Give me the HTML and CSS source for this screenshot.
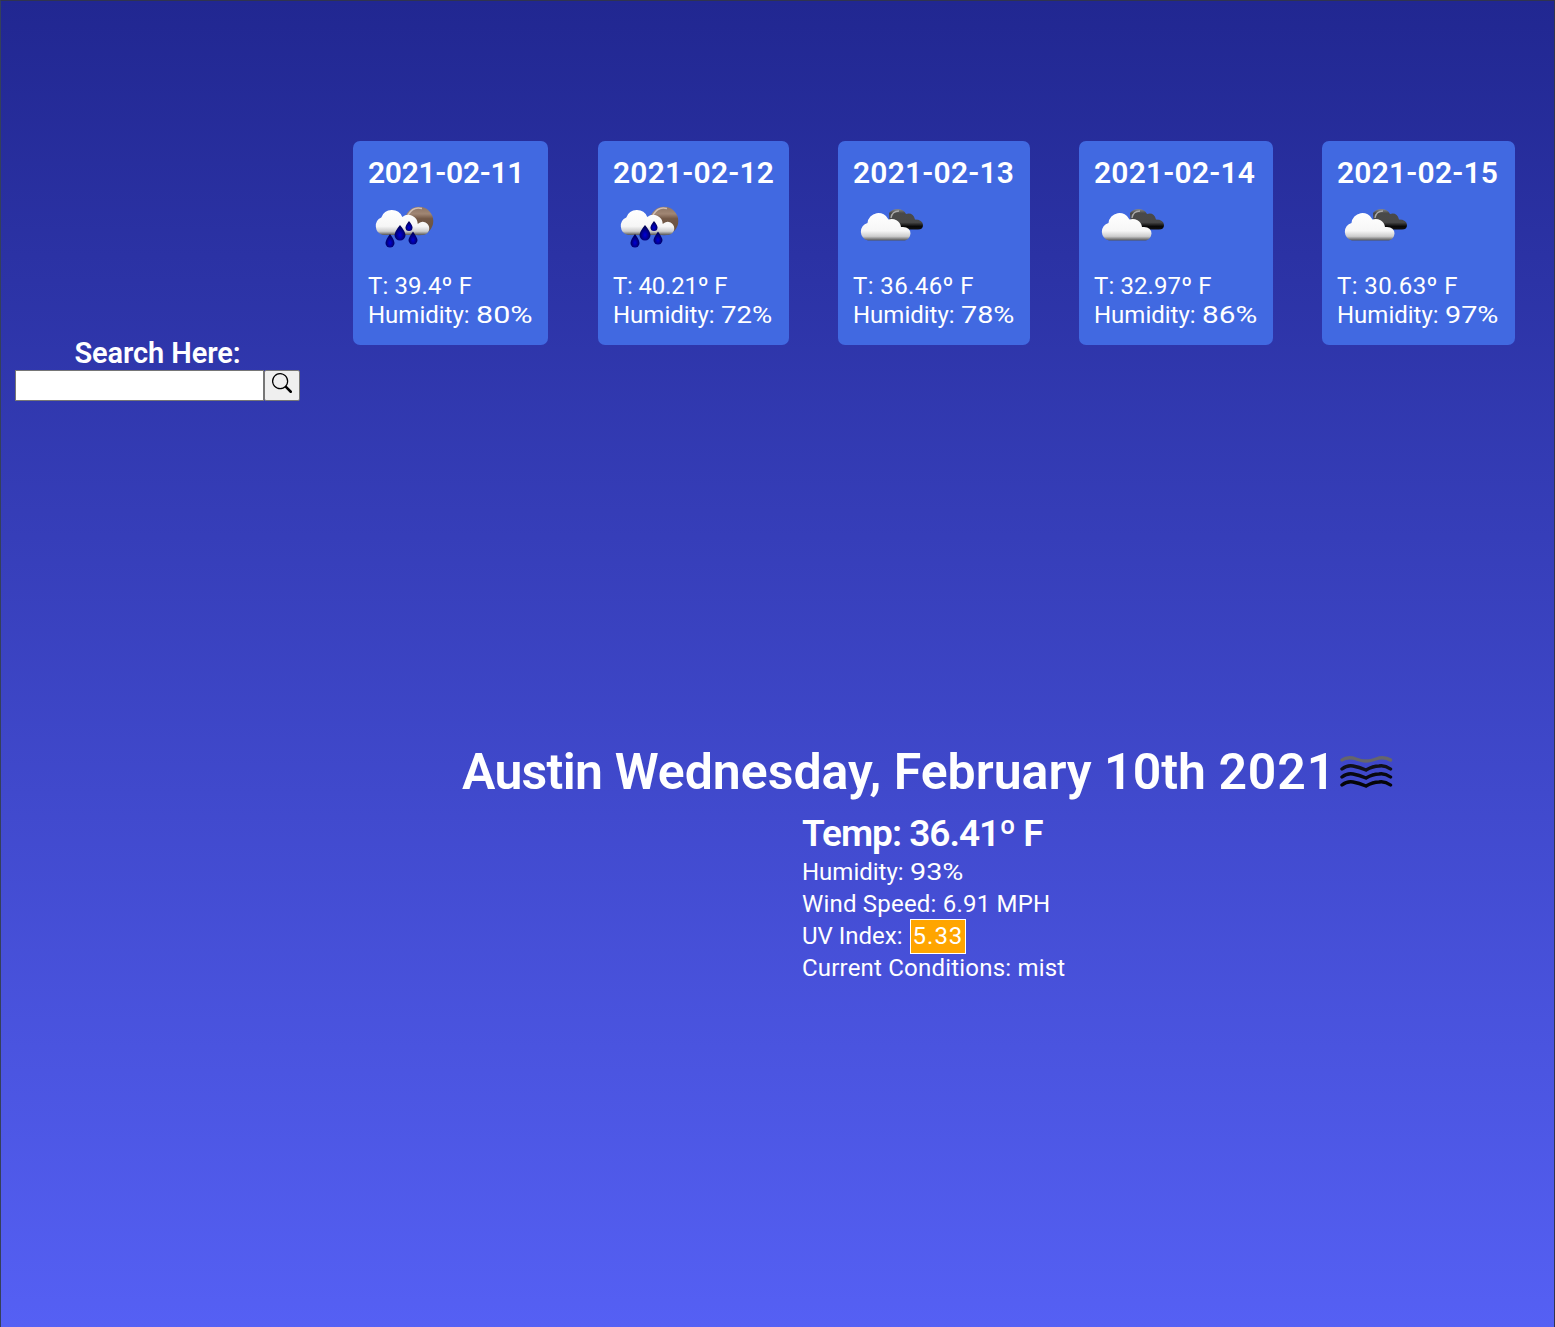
FILE: index.html
```html
<!DOCTYPE html>
<html lang="en">
<head>
<meta charset="utf-8">
<title>Weather Dashboard</title>
<link rel="stylesheet" href="styles.css">
</head>
<body>
<svg class="defs" aria-hidden="true">
  <defs>
    <linearGradient id="white" x1="0" y1="0" x2="0" y2="1"><stop offset="0" stop-color="#fff"/><stop offset=".65" stop-color="#f6f6f6"/><stop offset=".85" stop-color="#ccc"/><stop offset="1" stop-color="#555"/></linearGradient>
    <linearGradient id="dark" x1="0" y1="0" x2="0" y2="1"><stop offset="0" stop-color="#888"/><stop offset=".2" stop-color="#494949"/><stop offset=".65" stop-color="#484848"/><stop offset=".85" stop-color="#080808"/><stop offset="1" stop-color="#111"/></linearGradient>
    <linearGradient id="moon" x1="0" y1="0" x2="0" y2="1"><stop offset="0" stop-color="#8c7363"/><stop offset=".25" stop-color="#a08674"/><stop offset=".42" stop-color="#735846"/><stop offset="1" stop-color="#63503f"/></linearGradient>
    <radialGradient id="drop" cx=".5" cy=".65" r=".5"><stop offset="0" stop-color="#0000d8"/><stop offset="1" stop-color="#00005c"/></radialGradient>
    <symbol id="rain" viewBox="0 0 80 83">
      <circle cx="51" cy="33" r="14.300" fill="url(#moon)"/>
      <path d="M40 27Q45 18 54 20.500" fill="none" stroke="#d0beb2" stroke-width="1.500"/>
      <path d="M16 47.500A9.300 9.300 0 0 1 14.500 30A11.300 11.300 0 0 1 35.500 29.500A9.500 9.500 0 0 1 51 36.500A6.600 6.600 0 1 1 55 47.500Z" transform="translate(-1.200 -.5)" fill="url(#white)"/>
      <g fill="url(#drop)"><path d="M32 37Q37 43 37.500 47A5.300 5.300 0 0 1 26.500 47Q27 43 32 37Z"/><path d="M41 33Q44.500 37 44.500 39.500A3.500 3.500 0 0 1 37.500 39.500Q37.500 37 41 33Z"/><path d="M22 46Q26 51 26.500 55A4.300 4.300 0 0 1 17.500 55Q18 51 22 46Z"/><path d="M45 43.500Q49 49 49.500 52A4.300 4.300 0 0 1 40.500 52Q41 49 45 43.500Z"/></g>
    </symbol>
    <symbol id="clouds" viewBox="0 0 80 83">
      <path d="M37 41.500L36 25Q39 21 45 21Q51 21.500 53 26Q60 24 62 31.500Q69.500 31.500 70 37Q70 41.500 65 41.500Z" fill="url(#dark)"/>
      <path d="M38 30Q39 23 46 23" fill="none" stroke="#aaa" stroke-width="1.300"/>
      <path d="M15 52.500A9 9 0 0 1 14.500 35A11 11 0 0 1 35.500 31.500A9.500 9.500 0 0 1 48 39Q57 38 57.500 45.500Q57 51 52 52.500Z" fill="url(#white)"/>
    </symbol>
  </defs>
</svg>
<div class="page">
  <aside class="search">
    <label class="search-title" for="city">Search Here:</label>
    <form class="search-form">
      <input class="search-input" id="city" type="text">
      <button class="search-button" type="button" aria-label="Search">
        <svg width="20" height="20" viewBox="0 0 16 16"><path d="M11.742 10.344a6.500 6.500 0 1 0-1.397 1.398h-.001c.03.04.062.078.098.115l3.850 3.850a1 1 0 0 0 1.415-1.414l-3.850-3.850a1.007 1.007 0 0 0-.115-.1zM12 6.500a5.500 5.500 0 1 1-11 0 5.500 5.500 0 0 1 11 0z"/></svg>
      </button>
    </form>
  </aside>
  <main class="content">
    <section class="forecast">
      <article class="card card-1"><h2 class="date">2021-02-11</h2><svg class="icon"><use href="#rain"/></svg><p class="line temperature">T: 39.4º F</p><p class="line">Humidity: <span class="value">80%</span></p></article>
      <article class="card card-2"><h2 class="date">2021-02-12</h2><svg class="icon"><use href="#rain"/></svg><p class="line temperature">T: 40.21º F</p><p class="line">Humidity: <span class="value">72%</span></p></article>
      <article class="card card-3"><h2 class="date">2021-02-13</h2><svg class="icon"><use href="#clouds"/></svg><p class="line temperature">T: 36.46º F</p><p class="line">Humidity: <span class="value">78%</span></p></article>
      <article class="card card-4"><h2 class="date">2021-02-14</h2><svg class="icon"><use href="#clouds"/></svg><p class="line temperature">T: 32.97º F</p><p class="line">Humidity: <span class="value">86%</span></p></article>
      <article class="card card-5"><h2 class="date">2021-02-15</h2><svg class="icon"><use href="#clouds"/></svg><p class="line temperature">T: 30.63º F</p><p class="line">Humidity: <span class="value">97%</span></p></article>
    </section>
    <section class="current">
      <h1 class="place"><span><span class="city">Austin</span> Wednesday, February 10th <span class="year">2021</span></span>
        <svg class="mist" width="54" height="34" viewBox="0 0 54 34" fill="none" stroke-width="3.400" stroke-linecap="round"><path stroke="#65656b" d="M2 5Q6 2 13 3Q21 6 26 6Q31 6 39 3Q46 2 50.500 5"/><path stroke="#101018" d="M2 14Q7 10 13 11Q19 12 26 15Q33 11 39 11Q45 10 50.500 14"/><path stroke="#080810" d="M2 22Q7 18 13 19Q19 20 26 23Q33 19 39 19Q45 18 50.500 22"/><path stroke="#050508" d="M2 30Q7 26 13 27Q19 28 26 31Q33 27 39 27Q45 26 50.500 30"/></svg>
      </h1>
      <div class="details">
        <h2 class="temp">Temp: 36.41º F</h2>
        <p class="detail">Humidity: <span class="value">93%</span></p>
        <p class="detail wind">Wind Speed: 6.91 MPH</p>
        <p class="detail index">UV Index: <span class="uv">5.33</span></p>
        <p class="detail conditions">Current Conditions: mist</p>
      </div>
    </section>
  </main>
</div>
</body>
</html>
```
FILE: styles.css
```css
* { box-sizing: border-box; }
body { margin: 0; font-family: Roboto, "Liberation Sans", sans-serif; color: #fff; }
h1, h2, p { margin: 0; white-space: nowrap; }
.defs { display: block; width: 0; height: 0; }
.page { display: flex; height: 1327px; border: 1px solid #30344f; border-left-color: #35405a; border-bottom: 0; background: linear-gradient(#212791, #5560f4); }
.search { width: 313px; padding: 337px 14px 0; }
.search-title { display: block; height: 32px; line-height: 30px; text-align: center; font-size: 29px; font-weight: 600; letter-spacing: -0.1px; }
.search-form { display: flex; }
.search-input { width: 249px; height: 31px; padding: 0; background: #fff; border: 1px solid #767676; border-radius: 0; }
.search-button { display: flex; align-items: flex-start; justify-content: center; width: 36px; height: 31px; padding: 2px 0 0; background: #efefef; border: 1px solid #767676; border-radius: 2px; }
.content { flex: 1; padding: 140px 39px 0 39px; }
.forecast { display: flex; gap: 49px; height: 204px; }
.card { flex: none; height: 204px; padding: 17px 15px 0; background: #4169e1; border-radius: 7px; }
.card-1 { width: 195px; margin-right: 1px; }
.card-2 { width: 191px; }
.card-3 { width: 192px; }
.card-4 { width: 194px; }
.card-5 { width: 193px; }
.date { height: 30px; line-height: 30px; font-size: 30px; font-weight: 600; letter-spacing: 0.2px; }
.card-1 .date { letter-spacing: -0.3px; }
.icon { display: block; width: 80px; height: 83px; }
.line { height: 29px; line-height: 31px; font-size: 24px; }
.temperature { letter-spacing: 0.4px; }
.card-1 .temperature { letter-spacing: 0.1px; }
.card-2 .temperature { letter-spacing: -0.2px; }
.card-4 .temperature { letter-spacing: 0.1px; }
.value { display: inline-block; transform: scaleX(1.2); transform-origin: left; }
.card-1 .value { transform: scaleX(1.27); }
.card-2 .value { transform: scaleX(1.15); }
.card-4 .value { transform: scaleX(1.24); }
.current { padding: 397px 0 0 109px; }
.place { display: flex; gap: 4px; align-items: center; height: 60px; line-height: 60px; font-size: 50px; font-weight: 600; }
.city { letter-spacing: -0.7px; }
.year { letter-spacing: 0.9px; }
.details { padding: 16px 0 0 340px; }
.temp { height: 38px; line-height: 31px; font-size: 37px; font-weight: 600; letter-spacing: -1px; }
.detail { height: 32px; line-height: 32px; font-size: 24px; }
.wind, .conditions { letter-spacing: 0.2px; }
.index { display: flex; align-items: center; gap: 7px; height: 32px; }
.uv { flex: none; width: 56px; height: 35px; line-height: 32px; padding-left: 2px; background: orange; border: 1px solid #fff; letter-spacing: 1px; }
```
